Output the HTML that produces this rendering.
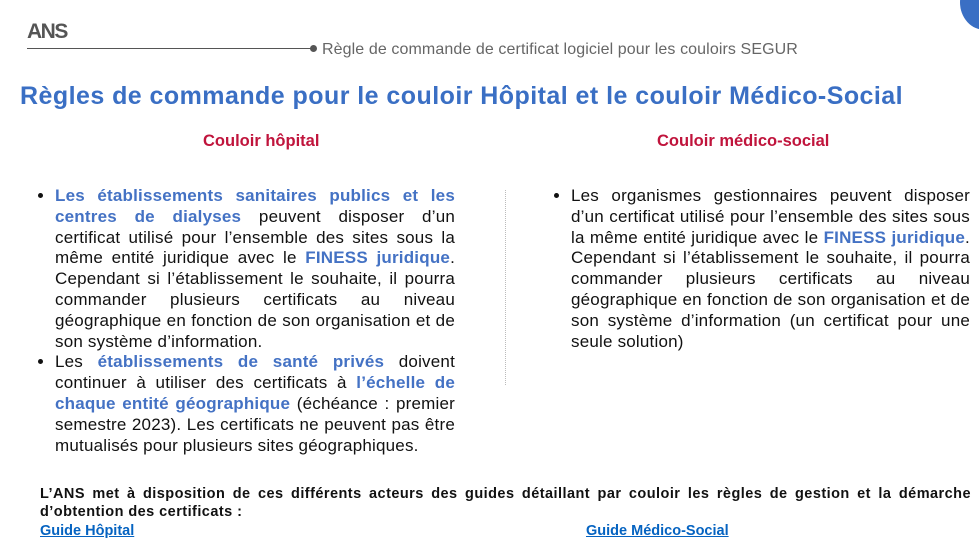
<!DOCTYPE html>
<html><head><meta charset="utf-8"><style>
body{margin:0;width:979px;height:546px;background:#fff;position:relative;overflow:hidden;font-family:"Liberation Sans",Arial,sans-serif;color:#111}
.abs{position:absolute}
.b{color:#4472c4;font-weight:bold}
.col{font-size:17px;letter-spacing:0.2px;line-height:20.8px;text-align:justify}
.col li{margin:0;padding:0}
ul{margin:0;padding:0 0 0 15px}
.h{color:#c0143c;font-weight:bold;font-size:16.5px}
a{color:#0563c1;font-weight:bold;font-size:14.5px;text-decoration:underline}
</style></head><body>
<div class="abs" style="left:27px;top:20px;font-size:21px;font-weight:bold;color:#555;letter-spacing:-1.5px">ANS</div>
<div class="abs" style="left:27px;top:48px;width:285px;height:1px;background:#555"></div>
<div class="abs" style="left:310px;top:45px;width:7px;height:7px;border-radius:50%;background:#555"></div>
<div class="abs" style="left:322px;top:41px;font-size:16px;color:#666;letter-spacing:0.1px">Règle de commande de certificat logiciel pour les couloirs SEGUR</div>
<div class="abs" style="left:960px;top:-25px;width:50px;height:55px;border-radius:50%;background:#3a6fc4"></div>
<div class="abs" style="left:20px;top:82px;font-size:25px;font-weight:bold;color:#3a6fc4;letter-spacing:0.45px">Règles de commande pour le couloir Hôpital et le couloir Médico-Social</div>
<div class="abs h" style="left:203px;top:132px">Couloir hôpital</div>
<div class="abs h" style="left:657px;top:132px">Couloir médico-social</div>
<div class="abs col" style="left:40px;top:186px;width:415px"><ul>
<li><span class="b">Les établissements sanitaires publics et les centres de dialyses</span> peuvent disposer d’un certificat utilisé pour l’ensemble des sites sous la même entité juridique avec le <span class="b">FINESS juridique</span>. Cependant si l’établissement le souhaite, il pourra commander plusieurs certificats au niveau géographique en fonction de son organisation et de son système d’information.</li>
<li>Les <span class="b">établissements de santé privés</span> doivent continuer à utiliser des certificats à <span class="b">l’échelle de chaque entité géographique</span> (échéance : premier semestre 2023). Les certificats ne peuvent pas être mutualisés pour plusieurs sites géographiques.</li></ul></div>
<div class="abs" style="left:505px;top:190px;height:195px;border-left:1px dotted #bbb"></div>
<div class="abs col" style="left:556px;top:186px;width:414px"><ul>
<li>Les organismes gestionnaires peuvent disposer d’un certificat utilisé pour l’ensemble des sites sous la même entité juridique avec le <span class="b">FINESS juridique</span>. Cependant si l’établissement le souhaite, il pourra commander plusieurs certificats au niveau géographique en fonction de son organisation et de son système d’information (un certificat pour une seule solution)</li></ul></div>
<div class="abs" style="left:40px;top:485px;width:931px;font-size:14.5px;font-weight:bold;line-height:18px;text-align:justify;letter-spacing:0.45px">L’ANS met à disposition de ces différents acteurs des guides détaillant par couloir les règles de gestion et la démarche d’obtention des certificats :</div>
<div class="abs" style="left:40px;top:522px"><a>Guide Hôpital</a></div>
<div class="abs" style="left:586px;top:522px"><a>Guide Médico-Social</a></div>
</body></html>
